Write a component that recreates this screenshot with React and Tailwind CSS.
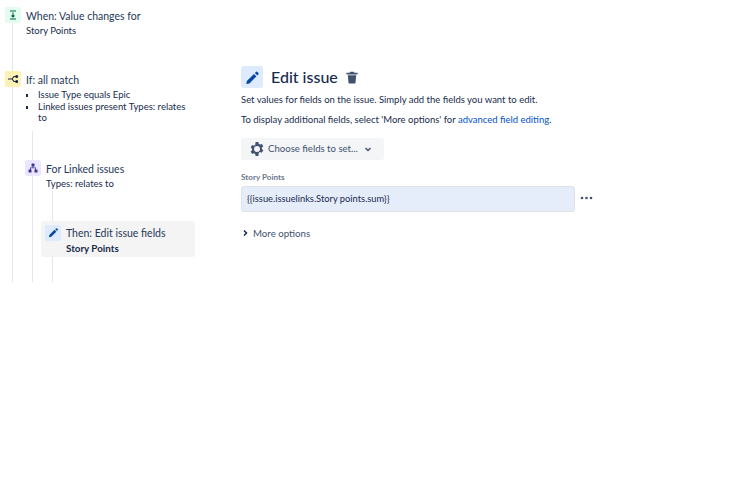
const font = { fontFamily: 'Lato, "Noto Sans", sans-serif' };

function Pencil({ size, color = "#0747a6" }) {
  return (
    <svg width={size} height={size} viewBox="0 0 24 24" fill={color}>
      <path d="M3 17.5 14.3 6.2l4 4L7 21.5l-5 1z" />
      <path d="M15.8 4.7l1.5-1.5a1.8 1.8 0 0 1 2.5 0l1.5 1.5a1.8 1.8 0 0 1 0 2.5l-1.5 1.5z" />
    </svg>
  );
}

export default function App() {
  return (
    <div style={font} className="w-[747px] h-[478px] bg-white flex text-[#172b4d] overflow-hidden">
      <div className="w-[241px] shrink-0 pt-[7px] pl-[12px]">
        <div className="w-[183px] h-[275px] border-l border-[#e4e6ea] flex flex-col">
          <div className="-ml-[8px] flex items-start gap-[5px]">
            <div className="w-[16px] h-[16px] rounded-[2px] bg-[#e3fcef] flex items-center justify-center shrink-0">
              <svg width="10" height="10" viewBox="0 0 10 10" fill="none" stroke="#006644" strokeWidth="1.1">
                <path d="M2 1h6M2 9h6M5 2.5v4.5M3.5 5.5 5 7l1.5-1.5" />
              </svg>
            </div>
            <div>
              <div className="text-[10.5px] leading-[18px] text-[#253858]">When: Value changes for</div>
              <div className="text-[9.5px] leading-[12px] text-[#172b4d]">Story Points</div>
            </div>
          </div>

          <div className="-ml-[8px] mt-[34px] flex items-start gap-[5px]">
            <div className="w-[16px] h-[16px] rounded-[2px] bg-[#fff0b3] flex items-center justify-center shrink-0">
              <svg width="12" height="12" viewBox="0 0 12 12" fill="none" stroke="#172b4d" strokeWidth="1.2">
                <path d="M1 6h4M5 6 7 3.5h2.5M5 6 7 8.5h2.5" />
                <circle cx="9.7" cy="3.5" r="0.9" fill="#172b4d" />
                <circle cx="9.7" cy="8.5" r="0.9" fill="#172b4d" />
              </svg>
            </div>
            <div>
              <div className="text-[10.5px] leading-[18px] text-[#253858]">If: all match</div>
              <ul className="w-[160px] text-[9.5px] leading-[11.5px]">
                <li className="flex"><span className="w-[12px] shrink-0 flex pt-[5px]"><span className="w-[2px] h-[3px] bg-[#172b4d]" /></span>Issue Type equals Epic</li>
                <li className="flex"><span className="w-[12px] shrink-0 flex pt-[5px]"><span className="w-[2px] h-[3px] bg-[#172b4d]" /></span><span>Linked issues present Types: relates to</span></li>
              </ul>
            </div>
          </div>

          <div className="ml-[19px] mt-[7px] flex-1 border-l border-[#e4e6ea] flex flex-col min-h-0">
            <div className="-ml-[8px] mt-[29px] flex items-start gap-[5px]">
              <div className="w-[16px] h-[16px] rounded-[2px] bg-[#eae6ff] flex items-center justify-center shrink-0">
                <svg width="10" height="10" viewBox="0 0 10 10" fill="#403294">
                  <rect x="3.5" y="0.5" width="3" height="3" rx="0.5" />
                  <rect x="0.5" y="6.5" width="3" height="3" rx="0.5" />
                  <rect x="6.5" y="6.5" width="3" height="3" rx="0.5" />
                  <path d="M4.6 3h.8v1.5H8V7h-.8V5.3H2.8V7H2V4.5h2.6z" />
                </svg>
              </div>
              <div>
                <div className="text-[10.5px] leading-[18px] text-[#253858]">For Linked issues</div>
                <div className="text-[9.5px] leading-[12px]">Types: relates to</div>
              </div>
            </div>

            <div className="ml-[19px] mt-[1px] flex-1 border-l border-[#e4e6ea] flex flex-col">
              <div className="-ml-[12px] mt-[30px] w-[154px] h-[36px] rounded-[3px] bg-[#f4f4f4] pl-[4px] pt-[4px] flex items-start gap-[5px]">
                <div className="w-[16px] h-[16px] rounded-[2px] bg-[#deebff] flex items-center justify-center shrink-0">
                  <Pencil size={11} />
                </div>
                <div>
                  <div className="text-[10.5px] leading-[18px] -mt-[1px] text-[#253858]">Then: Edit issue fields</div>
                  <div className="text-[9.8px] leading-[12px] font-bold">Story Points</div>
                </div>
              </div>
            </div>
          </div>
        </div>
      </div>

      <div className="flex-1 pt-[66px]">
        <div className="flex items-center">
          <div className="w-[22px] h-[22px] rounded-[3px] bg-[#deebff] flex items-center justify-center">
            <Pencil size={15} />
          </div>
          <div className="ml-[8px] text-[16px] leading-[22px] font-medium text-[#172b4d]">Edit issue</div>
          <svg className="ml-[8px]" width="12" height="13" viewBox="0 0 12 13" fill="#42526e">
            <path d="M4.2.8h3.6l.5 1H11a.6.6 0 0 1 0 1.6H1A.6.6 0 0 1 1 1.8h2.7z" />
            <path d="M1.8 4.3h8.4l-.7 7.4a1 1 0 0 1-1 .9H3.5a1 1 0 0 1-1-.9z" />
          </svg>
        </div>
        <p className="text-[9.5px] leading-[12px] mt-[6px]">Set values for fields on the issue. Simply add the fields you want to edit.</p>
        <p className="text-[9.5px] leading-[12px] mt-[8px]">
          To display additional fields, select 'More options' for <span className="text-[#0052cc]">advanced field editing</span>.
        </p>
        <div className="mt-[12px] w-[143px] h-[22px] rounded-[3px] bg-[#f4f5f7] flex items-center pl-[9px] text-[#42526e]">
          <svg width="14" height="14" viewBox="0 0 14 14" fill="#42526e">
            <path fillRule="evenodd" d="M5.6 0h2.8l.4 1.9 1.3.7 1.8-.7 1.4 2.4-1.4 1.3v1.4l1.4 1.3-1.4 2.4-1.8-.7-1.3.7L8.4 14H5.6l-.4-2.1-1.3-.7-1.8.7L.7 9.5l1.4-1.3V6.8L.7 5.5l1.4-2.4 1.8.7 1.3-.9zM7 4a3 3 0 1 0 0 6 3 3 0 0 0 0-6z" />
          </svg>
          <span className="ml-[4px] text-[9.6px] leading-[12px]">Choose fields to set...</span>
          <svg className="ml-[6px]" width="8" height="8" viewBox="0 0 8 8" fill="none" stroke="#42526e" strokeWidth="1.5">
            <path d="M1.5 3 4 5.5 6.5 3" />
          </svg>
        </div>
        <div className="mt-[12px] text-[8.1px] leading-[10px] font-bold text-[#6b778c]">Story Points</div>
        <div className="mt-[4px] flex items-center">
          <div className="w-[334px] h-[26px] rounded-[3px] bg-[#e6edfa] border border-[#dfe1e6] flex items-center pl-[5px] text-[9.3px] leading-[12px]">
            {"{{issue.issuelinks.Story points.sum}}"}
          </div>
          <svg className="ml-[5px] -mt-[3px]" width="13" height="4" viewBox="0 0 13 4" fill="#42526e">
            <circle cx="2" cy="2" r="1.3" /><circle cx="6.5" cy="2" r="1.3" /><circle cx="11" cy="2" r="1.3" />
          </svg>
        </div>
        <div className="mt-[14px] flex items-center text-[9.7px] leading-[14px] text-[#42526e]">
          <svg width="8" height="8" viewBox="0 0 8 8" fill="none" stroke="#172b4d" strokeWidth="1.5">
            <path d="M3 1.5 5.5 4 3 6.5" />
          </svg>
          <span className="ml-[4px]">More options</span>
        </div>
      </div>
    </div>
  );
}
